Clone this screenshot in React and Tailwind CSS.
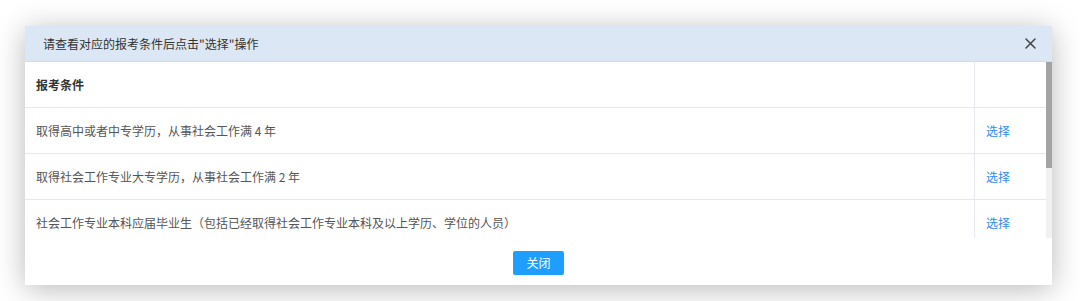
import React from 'react';

const ROWS = [
  '取得高中或者中专学历，从事社会工作满 4 年',
  '取得社会工作专业大专学历，从事社会工作满 2 年',
  '社会工作专业本科应届毕业生（包括已经取得社会工作专业本科及以上学历、学位的人员）',
];

function CloseIcon() {
  return (
    <svg width="11" height="11" viewBox="0 0 11 11" fill="none">
      <path d="M1 1L10 10M10 1L1 10" stroke="#444" strokeWidth="1.5" strokeLinecap="round" />
    </svg>
  );
}

export default function App() {
  return (
    <div
      className="w-[1080px] h-[301px] bg-white pt-[26px] pl-[25px] overflow-hidden"
      style={{ fontFamily: '"Noto Sans CJK SC", "Microsoft YaHei", sans-serif' }}
    >
      <div className="w-[1027px] h-[259px] bg-white flex flex-col shadow-[0_4px_28px_rgba(0,0,0,0.28)]">
        {/* title bar */}
        <div className="h-[36px] bg-[#dbe7f4] flex items-center justify-between pl-[18px] pr-[16px] border-b border-[#d3dde8]">
          <span className="text-[12px] text-[#333]">请查看对应的报考条件后点击"选择"操作</span>
          <CloseIcon />
        </div>

        {/* table + scrollbar */}
        <div className="h-[176px] flex">
          <div className="flex-1 overflow-hidden">
            <div className="flex h-[46px] border-b border-[#e2eaef]">
              <div className="flex-1 flex items-center pl-[11px] text-[12px] font-bold text-[#333]">报考条件</div>
              <div className="w-[72px] border-l border-[#e2eaef]" />
            </div>
            {ROWS.map((text, i) => (
              <div key={i} className="flex h-[46px] border-b border-[#e2eaef]">
                <div className="flex-1 flex items-center pl-[11px] text-[12px] text-[#555]">{text}</div>
                <div className="w-[72px] border-l border-[#e2eaef] flex items-center pl-[11px] text-[12px] text-[#2d8cf0]">
                  选择
                </div>
              </div>
            ))}
          </div>
          <div className="w-[6px] bg-[#f1f1f1]">
            <div className="h-[106px] bg-[#a3a3a3]" />
          </div>
        </div>

        {/* footer */}
        <div className="flex-1 flex items-center justify-center pt-[3px]">
          <button className="w-[51px] h-[24px] rounded-[2px] bg-[#1e9fff] text-white text-[12px]">关闭</button>
        </div>
      </div>
    </div>
  );
}
